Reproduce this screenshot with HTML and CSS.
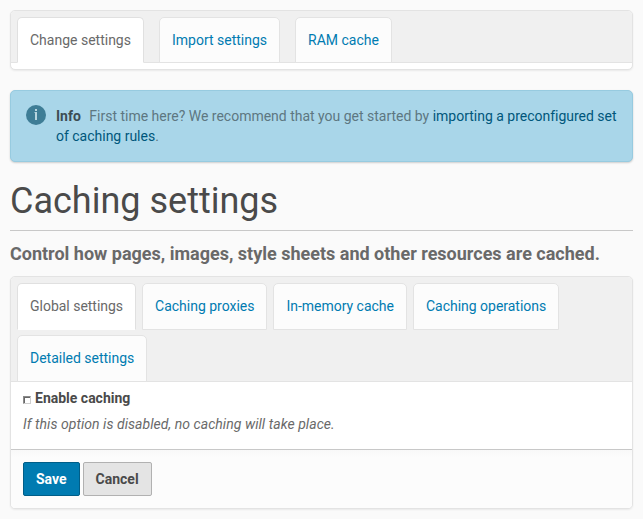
FILE: index.html
```
<!DOCTYPE html>
<html lang="en">
<head>
<meta charset="utf-8">
<title>Caching settings</title>
<link rel="stylesheet" href="styles.css">
</head>
<body>
<section class="panel">
  <nav class="tabs tabs-wide">
    <a class="tab active">Change settings</a>
    <a class="tab">Import settings</a>
    <a class="tab">RAM cache</a>
  </nav>
  <div class="spacer"></div>
</section>
<aside class="message">
  <svg class="info-icon" viewBox="0 0 20 20"><circle cx="10" cy="10" r="10" fill="#3e7d96"/><path d="M9 4h2v2H9zM8.5 7H11v8H9V8h-.5z" fill="#b8d5df"/></svg>
  <p class="message-text"><strong>Info</strong>First time here? We recommend that you get started by <a>importing a preconfigured set of caching rules</a>.</p>
</aside>
<h1>Caching settings</h1>
<p class="description">Control how pages, images, style sheets and other resources are cached.</p>
<form class="panel">
  <nav class="tabs tabs-form">
    <a class="tab active">Global settings</a>
    <a class="tab">Caching proxies</a>
    <a class="tab">In-memory cache</a>
    <a class="tab">Caching operations</a>
    <a class="tab">Detailed settings</a>
  </nav>
  <div class="field">
    <label><input type="checkbox">Enable caching</label>
    <p class="help">If this option is disabled, no caching will take place.</p>
  </div>
  <div class="actions">
    <button type="button" class="save">Save</button>
    <button type="button" class="cancel">Cancel</button>
  </div>
</form>
</body>
</html>
```
FILE: styles.css
```
* { box-sizing: border-box; }
body {
  margin: 0;
  padding: 10px;
  background: #fafafa;
  color: #696969;
  font: 14px/20px Roboto, "Liberation Sans", sans-serif;
}
p, h1 { margin: 0; }
.panel {
  border: 1px solid #e3e3e3;
  border-radius: 5px;
  background: #fff;
  box-shadow: 0 1px 2px rgba(0, 0, 0, .07);
  overflow: hidden;
}
.tabs {
  display: flex;
  flex-wrap: wrap;
  padding: 6px 6px 0;
  background: #f0f0f0;
  box-shadow: inset 0 -1px #e3e3e3;
}
.tabs-wide { gap: 15px; }
.tabs-form { gap: 5px 6px; }
.tab {
  height: 46px;
  padding: 12px 12px 0;
  border: 1px solid #e3e3e3;
  border-radius: 5px 5px 0 0;
  background: #fcfcfc;
  color: #007bb1;
  white-space: nowrap;
}
.tabs-form .tab { height: 47px; letter-spacing: -.015px; }
.active {
  border-color: #e0e0e0;
  border-bottom-color: #fff;
  background: #fff;
  color: #696969;
}
.tabs .active { color: #696969; }
.spacer { height: 6px; }
.message {
  display: flex;
  gap: 10px;
  height: 72px;
  margin-top: 20px;
  padding: 14px 12px 14px 15px;
  border: 1px solid #97cbe0;
  border-radius: 5px;
  background: #a9d6e9;
  box-shadow: 0 1px 2px rgba(0, 0, 0, .18);
}
.info-icon { flex: none; width: 20px; height: 20px; }
.message-text { padding-top: 1px; color: #5d7781; letter-spacing: -.01px; }
.message strong { margin-right: 8.5px; color: #3d4d54; }
.message a { color: #00567b; }
h1 {
  height: 69px;
  padding-top: 19px;
  border-bottom: 1px solid #c8c8c8;
  color: #4a4a4a;
  font-size: 36px;
  font-weight: 400;
  line-height: 40px;
}
.description {
  height: 45px;
  padding-top: 13px;
  font-size: 18px;
  font-weight: 700;
}
.field { height: 67px; padding: 6px 12px 0; }
.field label {
  display: flex;
  align-items: center;
  color: #4a4a4a;
  font-weight: 700;
}
input {
  appearance: none;
  width: 8px;
  height: 8px;
  margin: 4px 4px 0 0;
  border: 1px solid #cfcfcf;
  border-top-color: #8b8b8b;
  border-left-color: #8b8b8b;
  background: #fff;
  box-shadow: inset 1px 1px #686868;
}
.help { margin-top: 6px; font-style: italic; letter-spacing: .05px; }
.actions {
  display: flex;
  gap: 3px;
  height: 59px;
  padding: 12px;
  border-top: 1px solid #c8c8c8;
  background: linear-gradient(#f8f8f8, #fcfcfc 8px);
}
button {
  height: 34px;
  padding: 0 12px;
  border: 1px solid #b1b1b1;
  border-radius: 2px;
  background: #e4e4e4;
  color: #4a4a4a;
  font: 700 14px/20px Roboto, "Liberation Sans", sans-serif;
}
.save {
  border-color: #005e88;
  background: #007bb1;
  color: #fff;
}
```
